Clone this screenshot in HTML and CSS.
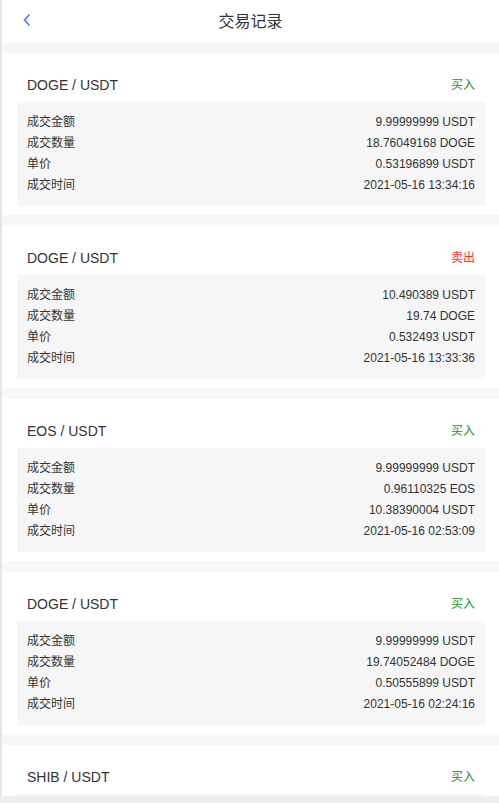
FILE: index.html
```html
<!DOCTYPE html>
<html lang="zh">
<head>
<meta charset="utf-8">
<title>交易记录</title>
<link rel="stylesheet" href="styles.css">
</head>
<body>
<div class="page">
  <header class="topbar">
    <span class="back">
      <svg width="10" height="14" viewBox="0 0 10 14"><path d="M7.5 1.5 L2.5 7 L7.5 12.5" fill="none" stroke="#5a6ff0" stroke-width="1.6"/></svg>
    </span>
    <h1 class="title">交易记录</h1>
  </header>

  <div class="list">
    <section class="card">
      <div class="card-head"><span class="pair">DOGE / USDT</span><span class="side buy">买入</span></div>
      <div class="info">
        <div class="row"><span>成交金额</span><span>9.99999999 USDT</span></div>
        <div class="row"><span>成交数量</span><span>18.76049168 DOGE</span></div>
        <div class="row"><span>单价</span><span>0.53196899 USDT</span></div>
        <div class="row"><span>成交时间</span><span>2021-05-16 13:34:16</span></div>
      </div>
    </section>
    <section class="card">
      <div class="card-head"><span class="pair">DOGE / USDT</span><span class="side sell">卖出</span></div>
      <div class="info">
        <div class="row"><span>成交金额</span><span>10.490389 USDT</span></div>
        <div class="row"><span>成交数量</span><span>19.74 DOGE</span></div>
        <div class="row"><span>单价</span><span>0.532493 USDT</span></div>
        <div class="row"><span>成交时间</span><span>2021-05-16 13:33:36</span></div>
      </div>
    </section>
    <section class="card">
      <div class="card-head"><span class="pair">EOS / USDT</span><span class="side buy">买入</span></div>
      <div class="info">
        <div class="row"><span>成交金额</span><span>9.99999999 USDT</span></div>
        <div class="row"><span>成交数量</span><span>0.96110325 EOS</span></div>
        <div class="row"><span>单价</span><span>10.38390004 USDT</span></div>
        <div class="row"><span>成交时间</span><span>2021-05-16 02:53:09</span></div>
      </div>
    </section>
    <section class="card">
      <div class="card-head"><span class="pair">DOGE / USDT</span><span class="side buy">买入</span></div>
      <div class="info">
        <div class="row"><span>成交金额</span><span>9.99999999 USDT</span></div>
        <div class="row"><span>成交数量</span><span>19.74052484 DOGE</span></div>
        <div class="row"><span>单价</span><span>0.50555899 USDT</span></div>
        <div class="row"><span>成交时间</span><span>2021-05-16 02:24:16</span></div>
      </div>
    </section>
    <section class="card">
      <div class="card-head"><span class="pair">SHIB / USDT</span><span class="side buy">买入</span></div>
      <div class="info info-empty"></div>
    </section>
  </div>
  <div class="bottom-shade"></div>
</div>
</body>
</html>
```

FILE: styles.css
```css
html, body {
  margin: 0;
  padding: 0;
  background: #f7f7f7;
}
body {
  font-family: "Liberation Sans", Arial, "Noto Sans CJK SC", sans-serif;
  color: #333;
}
.page {
  border-left: 2px solid #e6e6e6;
  min-height: 100vh;
  background: #f7f7f7;
}
.topbar {
  height: 43px;
  background: #fff;
  display: flex;
  align-items: center;
  justify-content: center;
  position: relative;
}
.back {
  position: absolute;
  left: 20px;
  top: 13px;
  width: 10px;
  height: 14px;
  display: flex;
}
.title {
  margin: 0;
  font-size: 16px;
  font-weight: normal;
  color: #333;
  line-height: 20px;
}
.list {
  padding-top: 10px;
  display: flex;
  flex-direction: column;
  gap: 10px;
}
.card {
  background: #fff;
  padding: 0 14px 10px 15px;
  box-shadow: inset 0 -1px 0 #f7f7f7;
}
.card-head {
  height: 49px;
  padding: 22px 10px 0 10px;
  box-sizing: border-box;
  display: flex;
  justify-content: space-between;
  line-height: 20px;
}
.card-head .pair {
  font-size: 14px;
  color: #333;
}
.side {
  font-size: 12px;
}
.buy { color: #14901a; }
.sell { color: #ff3030; }
.info {
  background: #f6f6f6;
  padding: 10px;
  font-size: 12px;
  line-height: 21px;
}
.info-empty {
  height: 84px;
}
.row {
  display: flex;
  justify-content: space-between;
}
.bottom-shade {
  position: fixed;
  left: 0;
  right: 0;
  bottom: 0;
  height: 7px;
  background: linear-gradient(#f0f0f0, #ececec);
}
```
